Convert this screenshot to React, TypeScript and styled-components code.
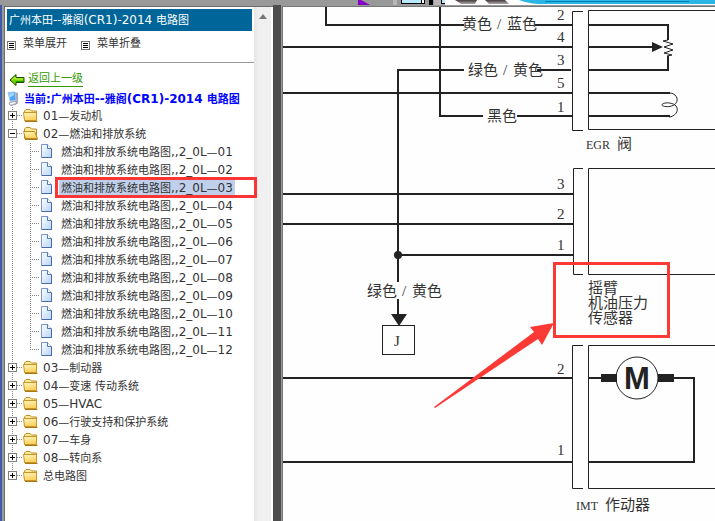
import React, { useState } from "react";
import styled, { createGlobalStyle } from "styled-components";

const GlobalStyle = createGlobalStyle`
  * { box-sizing: border-box; }
  body { margin: 0; background: #fff; }
`;

const uiFont = `"DejaVu Sans", "Noto Sans CJK SC", sans-serif`;
const dots = "repeating-linear-gradient(to bottom, #888 0 1px, transparent 1px 2px)";
const dotsAcross = "repeating-linear-gradient(to right, #888 0 1px, transparent 1px 2px)";

const Page = styled.div`
  display: flex;
  flex-direction: column;
  min-height: 100vh;
  overflow: hidden;
  font: 11px/18px ${uiFont};
  color: #333;
`;

const Latin = styled.span`
  font-size: 12px;
`;

const Banner = styled.header`
  height: 5px;
  background: #999;
  svg { display: block; width: 100%; height: 5px; }
`;

const Frames = styled.div`
  flex: 1;
  display: flex;
  align-items: stretch;
  border-left: 2px solid #3f5aa6;
  background: #999;
`;

const Sidebar = styled.aside`
  flex: none;
  width: 269px;
  display: flex;
  margin-left: 2px;
  margin-top: 1px;
  border: solid #6b6b6b;
  border-width: 1px 0 0 1px;
  background: #fff;
`;

const SidebarBody = styled.div`
  flex: 1;
  min-width: 0;
  padding-top: 2px;
`;

const Title = styled.h1`
  margin: 0 2px;
  padding: 0 2px;
  height: 22px;
  font: 11px/22px ${uiFont};
  color: #fff;
  background: #069;
  white-space: nowrap;
`;

const Toolbar = styled.div`
  display: flex;
  gap: 14px;
  height: 32px;
  padding: 4px 2px 0;
  border-bottom: 1px solid #999;
`;

const ToolButton = styled.button`
  display: flex;
  align-items: center;
  gap: 7px;
  height: 18px;
  padding: 0;
  border: 0;
  background: none;
  font: inherit;
  color: inherit;
  svg { margin-top: 2px; }
`;

const BackRow = styled.div`
  display: flex;
  align-items: center;
  height: 24px;
  margin-top: 4px;
  padding-left: 4px;
  gap: 3px;
`;

const BackLink = styled.a`
  height: 16px;
  line-height: 16px;
  border-bottom: 1px solid #390;
  color: #390;
  text-decoration: none;
`;

const Current = styled.p`
  display: flex;
  align-items: center;
  gap: 4px;
  height: 16px;
  margin: 0;
  padding-left: 2px;
  font-weight: bold;
  color: #00f;
  white-space: nowrap;
`;

const Tree = styled.ul`
  margin: 0;
  padding: 0;
  list-style: none;
`;

const Branch = styled.li`
  background: ${dots} 7px 0 / 1px 100% no-repeat;
  &:last-child { background-size: 1px 9px; }
`;

const BranchRow = styled.div`
  display: flex;
  align-items: center;
  height: 18px;
  padding-left: 3px;
  white-space: nowrap;
`;

const Toggle = styled.button`
  display: block;
  flex: none;
  width: 9px;
  height: 9px;
  margin-bottom: 2px;
  padding: 0;
  border: 0;
  background: #fff;
  svg { display: block; }
`;

const Connector = styled.span<{ $length: number }>`
  flex: none;
  width: ${(p) => p.$length}px;
  height: 1px;
  margin-bottom: 2px;
  background: ${dotsAcross};
`;

const NodeIcon = styled.svg`
  flex: none;
  display: block;
  margin-bottom: 2px;
`;

const NodeLink = styled.a<{ $selected?: boolean }>`
  margin-left: 2px;
  padding: 1px 2px 0;
  line-height: 16px;
  color: inherit;
  text-decoration: none;
  background: ${(p) => (p.$selected ? "#c0d0ea" : "none")};
`;

const Leaf = styled.li`
  position: relative;
  display: flex;
  align-items: center;
  height: 18px;
  padding-left: 25px;
  white-space: nowrap;
  background: ${dots} 25px 0 / 1px 100% no-repeat;
  &:last-child { background-size: 1px 9px; }
  ${NodeLink} { margin-left: 6px; }
`;

const Marker = styled.span`
  position: absolute;
  z-index: 1;
  left: 50px;
  right: -3px;
  top: -2px;
  bottom: -1px;
  border: 3px solid #fb3434;
  pointer-events: none;
`;

const ScrollTrack = styled.div`
  flex: none;
  display: flex;
  flex-direction: column;
  align-items: center;
  width: 19px;
  padding: 7px 0 0;
  border-right: 2px solid #fff;
  background: linear-gradient(to right, #e6e6e6, #f0f0f0 5px);
`;

const Splitter = styled.div`
  flex: none;
  width: 8px;
  background: #4d4d4d;
`;

const DiagramPane = styled.main`
  flex: 1;
  min-width: 0;
  min-height: 515px;
  margin-top: 1px;
  margin-left: 1px;
  border: solid #777;
  border-width: 1px 0 0 1px;
  background: #fefefe;
  overflow: hidden;
`;

const Diagram = styled.svg`
  display: block;
  width: 100%;
  height: 100%;
  fill: none;
  stroke: #222;
`;

const Label = styled.text<{ $size?: number }>`
  font-family: "Liberation Serif", "Noto Sans CJK SC", serif;
  font-size: ${(p) => p.$size ?? 15}px;
  fill: #333;
  stroke: none;
`;

const MotorLetter = styled.text`
  font: bold 31px "Liberation Sans", sans-serif;
  fill: #222;
  stroke: none;
  text-anchor: middle;
`;

/* Latin runs are set one size larger than the Chinese text beside them. */
const Mixed = ({ text }: { text: string }) => (
  <span>
    {text.split(/([\x20-\x7e]+)/).map((run, i) => (i % 2 ? <Latin key={i}>{run}</Latin> : run))}
  </span>
);

const MenuIcon = () => (
  <svg width="9" height="9" viewBox="0 0 9 9" shapeRendering="crispEdges">
    <rect x="0.5" y="0.5" width="8" height="8" fill="#fff" stroke="#777" />
    <path d="M2 2.5h5M2 4.5h5M2 6.5h5" stroke="#000" />
  </svg>
);

const BackArrow = () => (
  <svg width="16" height="13" viewBox="0 0 16 13">
    <path d="M1 7 7 1.500v3h8v5H7v3Z" fill="#72d500" stroke="#174d00" />
    <path d="M3 7 6 4v2h8" fill="none" stroke="#c8f34a" />
    <path d="M6.500 8.500H15" stroke="#249900" />
  </svg>
);

const Computer = () => (
  <svg width="13" height="16" viewBox="0 0 13 16">
    <path d="m8 1 3 1v10l-3 2Z" fill="#aaa9b8" />
    <path d="M1 1.500 8 1l1 8.500-6 .5Z" fill="#4fa6f5" stroke="#a4c4ee" />
    <path d="M2 2.500 7 2v2L2.500 7Z" fill="#a0daff" />
    <path d="M3 11 9 10.500l1 2-6 2-2-1.500Z" fill="#d4d5de" stroke="#9a9bad" />
    <path d="m3 13 5-1.500" stroke="#fff" />
  </svg>
);

const ToggleIcon = ({ open }: { open: boolean }) => (
  <svg width="9" height="9" viewBox="0 0 9 9" shapeRendering="crispEdges">
    <rect x="0.5" y="0.5" width="8" height="8" fill="#fff" stroke="#808080" />
    <path d={open ? "M2 4.500h5" : "M2 4.500h5M4.500 2v5"} stroke="#000" />
  </svg>
);

const Folder = ({ open }: { open: boolean }) => (
  <NodeIcon width="16" height="14" viewBox="0 0 16 14">
    <defs>
      <linearGradient id="folder" x2="0.300" y2="1">
        <stop offset="0" stopColor="#fff8c4" />
        <stop offset="1" stopColor="#fcd05c" />
      </linearGradient>
    </defs>
    <path d="M1.500 12V3L3 1.500h4L8.500 3h5v9.500h-12Z" fill="#ffeb9b" stroke="#bd8b22" />
    {open ? (
      <path d="M.5 5.500h11l3 7h-12Z" fill="url(#folder)" stroke="#bd8b22" />
    ) : (
      <path d="M.5 4.500h13v8H1.500Z" fill="url(#folder)" stroke="#c99528" />
    )}
    <path d="M2 13.500h12.500" stroke="#a77818" />
  </NodeIcon>
);

const PageIcon = () => (
  <NodeIcon width="13" height="14" viewBox="0 0 13 14">
    <defs>
      <linearGradient id="sheet" x2="1" y2="1">
        <stop offset="0" stopColor="#fff" />
        <stop offset="1" stopColor="#b8d4fa" />
      </linearGradient>
    </defs>
    <path d="M1.500.5h6l4 4v9h-10Z" fill="url(#sheet)" stroke="#7995cb" />
    <path d="M7.500.5v4h4" fill="#fff" stroke="#5378b7" />
    <path d="M2 13.500h9.500V5" fill="none" stroke="#4669ad" />
  </NodeIcon>
);

const BannerArt = () => (
  <svg>
    <defs>
      <linearGradient id="blob" x2="0" y2="1"><stop stopColor="#423a38" /><stop offset="1" stopColor="#aaa" /></linearGradient>
    </defs>
    <path d="M358 0h3l9 5h-12Z" fill="#8500c8" />
    <path d="M393 0h4v5h-4Zm41 0h7v5h-7Z" fill="#b8b8b8" />
    <path d="M401 0h24v4h-24Z" fill="#000" />
    <path d="M402 0h19v3h-19Z" fill="#b7e9ff" />
    <path d="M422 0h2v3h-2Z" fill="#fff" />
    <path d="M429 0h4v5h-4Zm12 0h4v4h-4Z" fill="#000" />
    <path d="M442 0h3v3h-3Z" fill="#b7e9ff" />
    <rect x="445" width="100%" height="5" fill="#fff" />
    <path d="M455 0h22l-2 4h-14Zm30 0h20l4 4h-20Z" fill="url(#blob)" />
    <path d="M519 0H3000V4H538Q527 3 519 0Z" fill="#2bb5e4" />
    <path d="M545 1.500H689" stroke="#007db8" />
  </svg>
);

const Schematic = () => (
  <Diagram role="img" aria-label="电路图">
    <g transform="translate(-283 -7)">
      <g strokeWidth="2">
        <path d="M326 7V25H464M283 47H572M283 93H572M398 282V70H464M398 299V315" />
        <path d="M440 7V117" />
        <path d="M439 116H483M517 116H572M535 25H572M537 70H571" />
        <path d="M589 25H668V40M668 56V70H589M589 47H654M589 93H670M589 116H670" />
        <path d="M283 194H573M283 224H573M398 255H573" />
        <path d="M283 378H572M283 462H572M589 378H602M673 378H694V462H589" />
      </g>
      <path d="M583 11.500H572.500V130.500H583M3000 10.500H588.500V129.500H3000" />
      <path d="M583 168.500H573.500V274.500H583M3000 168.500H588.500V274.500H3000" />
      <path d="M583 345.500H572.500V488.500H583M3000 345.500H588.500V488.500H3000" />
      <path d="m668 40-5 1 10 3-9 3 9 3-9 3 8 2-5 1" />
      <path d="M669 93C676 93 679 99 676 103C673 108 662 107 662 105C662 102 673 102 676 106C680 111 674 117 669 117" />
      <path d="M652 42 663 47 652 52ZM391 314H407L399 326Z" fill="#222" stroke="none" />
      <circle cx="398" cy="255" r="4" fill="#222" stroke="none" />
      <rect x="382.500" y="325.500" width="32" height="29" />
      <path d="M601 374h16v8h-16ZM658 374h16v8h-16Z" fill="#222" stroke="none" />
      <circle cx="637" cy="378" r="21" />
      <MotorLetter x="637" y="389">M</MotorLetter>

      <Label x="462" y="29">黄色</Label>
      <Label x="497" y="29">/</Label>
      <Label x="507" y="29">蓝色</Label>
      <Label x="468" y="75">绿色</Label>
      <Label x="503" y="75">/</Label>
      <Label x="513" y="75">黄色</Label>
      <Label x="487" y="121">黑色</Label>
      <Label x="367" y="296">绿色</Label>
      <Label x="402" y="296">/</Label>
      <Label x="412" y="296">黄色</Label>

      <Label x="557" y="20">2</Label>
      <Label x="557" y="42">4</Label>
      <Label x="557" y="65">3</Label>
      <Label x="557" y="88">5</Label>
      <Label x="557" y="112">1</Label>
      <Label x="557" y="189">3</Label>
      <Label x="557" y="219">2</Label>
      <Label x="557" y="250">1</Label>
      <Label x="557" y="374">2</Label>
      <Label x="557" y="455">1</Label>
      <Label x="394" y="346">J</Label>

      <Label x="586" y="149" $size={12}>EGR</Label>
      <Label x="617" y="149">阀</Label>
      <Label x="588" y="293">摇臂</Label>
      <Label x="588" y="308">机油压力</Label>
      <Label x="588" y="323">传感器</Label>
      <Label x="576" y="510" $size={12}>IMT</Label>
      <Label x="605" y="510">作动器</Label>

      <rect x="554.500" y="263.500" width="114" height="73" stroke="#fb3a36" strokeWidth="3" />
      <path d="M434 407 534 332 530 327 554 323 542 345 538 339 435 408Z" fill="#fb3a36" stroke="none" />
    </g>
  </Diagram>
);

const leaves = Array.from({ length: 12 }, (_, i) => `燃油和排放系统电路图,,2_0L—${String(i + 1).padStart(2, "0")}`);

const branches: { name: string; children?: string[] }[] = [
  { name: "01—发动机" },
  { name: "02—燃油和排放系统", children: leaves },
  { name: "03—制动器" },
  { name: "04—变速 传动系统" },
  { name: "05—HVAC" },
  { name: "06—行驶支持和保护系统" },
  { name: "07—车身" },
  { name: "08—转向系" },
  { name: "总电路图" },
];

export default function App() {
  const [open, setOpen] = useState<string[]>([branches[1].name]);
  const [selected, setSelected] = useState(leaves[2]);
  const toggle = (name: string) =>
    setOpen((list) => (list.includes(name) ? list.filter((n) => n !== name) : [...list, name]));

  return (
    <Page>
      <GlobalStyle />
      <Banner><BannerArt /></Banner>
      <Frames>
        <Sidebar>
          <SidebarBody>
            <Title><Mixed text="广州本田--雅阁(CR1)-2014 电路图" /></Title>
            <Toolbar>
              <ToolButton onClick={() => setOpen(branches.map((b) => b.name))}><MenuIcon />菜单展开</ToolButton>
              <ToolButton onClick={() => setOpen([])}><MenuIcon />菜单折叠</ToolButton>
            </Toolbar>
            <BackRow><BackArrow /><BackLink href="#up">返回上一级</BackLink></BackRow>
            <Current><Computer /><Mixed text="当前:广州本田--雅阁(CR1)-2014 电路图" /></Current>
            <Tree>
              {branches.map(({ name, children }) => {
                const isOpen = open.includes(name);
                return (
                  <Branch key={name}>
                    <BranchRow>
                      <Toggle aria-label={name} aria-expanded={isOpen} onClick={() => toggle(name)}>
                        <ToggleIcon open={isOpen} />
                      </Toggle>
                      <Connector $length={6} />
                      <Folder open={isOpen} />
                      <NodeLink href="#branch"><Mixed text={name} /></NodeLink>
                    </BranchRow>
                    {isOpen && children && (
                      <Tree>
                        {children.map((leaf) => (
                          <Leaf key={leaf}>
                            <Connector $length={10} />
                            <PageIcon />
                            <NodeLink href="#leaf" $selected={leaf === selected} onClick={() => setSelected(leaf)}>
                              <Mixed text={leaf} />
                            </NodeLink>
                            {leaf === selected && <Marker />}
                          </Leaf>
                        ))}
                      </Tree>
                    )}
                  </Branch>
                );
              })}
            </Tree>
          </SidebarBody>
          <ScrollTrack>
            <svg width="8" height="5" viewBox="0 0 8 5"><path d="M4 0 8 5H0Z" fill="#777" /></svg>
          </ScrollTrack>
        </Sidebar>
        <Splitter />
        <DiagramPane><Schematic /></DiagramPane>
      </Frames>
    </Page>
  );
}
